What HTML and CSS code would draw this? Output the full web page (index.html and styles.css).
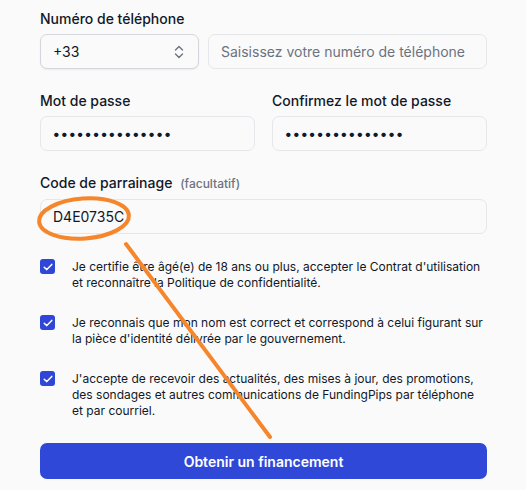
FILE: index.html
```html
<!DOCTYPE html>
<html lang="fr">
<head>
<meta charset="utf-8">
<link rel="stylesheet" href="styles.css">
</head>
<body>
<div class="form">
  <div class="field">
    <div class="label">Numéro de téléphone</div>
    <div class="phone-row">
      <div class="control select">
        <span>+33</span>
        <svg class="chev" width="10" height="14" viewBox="0 0 10 14"><path d="M1.5 5 L5 1.5 L8.5 5 M1.5 9 L5 12.5 L8.5 9" fill="none" stroke="#6b7280" stroke-width="1.4" stroke-linecap="round" stroke-linejoin="round"/></svg>
      </div>
      <div class="control grow placeholder">Saisissez votre numéro de téléphone</div>
    </div>
  </div>

  <div class="two-col">
    <div class="field">
      <div class="label">Mot de passe</div>
      <div class="control dots">•••••••••••••••</div>
    </div>
    <div class="field">
      <div class="label">Confirmez le mot de passe</div>
      <div class="control dots">•••••••••••••••</div>
    </div>
  </div>

  <div class="field">
    <div class="label">Code de parrainage <span class="opt">(facultatif)</span></div>
    <div class="control">D4E0735C</div>
  </div>

  <div class="checks">
    <div class="check">
      <span class="box"><svg width="10" height="8" viewBox="0 0 10 8"><path d="M1.2 4.2 L3.8 6.6 L8.8 1.4" fill="none" stroke="#fff" stroke-width="1.5" stroke-linecap="round" stroke-linejoin="round"/></svg></span>
      <p>Je certifie être âgé(e) de 18 ans ou plus, accepter le Contrat d'utilisation et reconnaître la Politique de confidentialité.</p>
    </div>
    <div class="check">
      <span class="box"><svg width="10" height="8" viewBox="0 0 10 8"><path d="M1.2 4.2 L3.8 6.6 L8.8 1.4" fill="none" stroke="#fff" stroke-width="1.5" stroke-linecap="round" stroke-linejoin="round"/></svg></span>
      <p>Je reconnais que mon nom est correct et correspond à celui figurant sur la pièce d'identité délivrée par le gouvernement.</p>
    </div>
    <div class="check">
      <span class="box"><svg width="10" height="8" viewBox="0 0 10 8"><path d="M1.2 4.2 L3.8 6.6 L8.8 1.4" fill="none" stroke="#fff" stroke-width="1.5" stroke-linecap="round" stroke-linejoin="round"/></svg></span>
      <p>J'accepte de recevoir des actualités, des mises à jour, des promotions, des sondages et autres communications de FundingPips par téléphone et par courriel.</p>
    </div>
  </div>

  <button class="btn">Obtenir un financement</button>
</div>

<svg class="annot" width="526" height="490" viewBox="0 0 526 490">
  <ellipse cx="84" cy="218.5" rx="45" ry="20" transform="rotate(-4 84 218.5)" fill="none" stroke="#f5862c" stroke-width="4"/>
  <line x1="126" y1="244" x2="270" y2="437" stroke="#f5862c" stroke-width="4" stroke-linecap="round"/>
</svg>
</body>
</html>
```

FILE: styles.css
```css
* { box-sizing: border-box; }
html, body { margin: 0; padding: 0; }
body {
  background: #fafafa;
  font-family: Inter, "Noto Sans", sans-serif;
  color: #111827;
  width: 526px;
  height: 490px;
  overflow: hidden;
  position: relative;
}
.form {
  padding: 9px 39px 0 40px;
  display: flex;
  flex-direction: column;
  gap: 22px;
}
.field {
  display: flex;
  flex-direction: column;
  gap: 5px;
}
.label {
  font-size: 14px;
  font-weight: 500;
  line-height: 20px;
  color: #111827;
}
.opt {
  font-size: 12px;
  font-weight: 500;
  color: #6b7280;
  margin-left: 4px;
}
.phone-row {
  display: flex;
  gap: 9px;
}
.control {
  height: 35px;
  flex: none;
  border: 1px solid #e5e7eb;
  border-radius: 7px;
  background: #fafafa;
  font-size: 14px;
  display: flex;
  align-items: center;
  padding: 0 12px;
  color: #111827;
}
.select {
  width: 159px;
  justify-content: space-between;
  border-color: #d4d6db;
  box-shadow: 0 1px 2px rgba(0,0,0,0.06);
  padding-right: 14px;
}
.grow { flex: 1; }
.placeholder { color: #6b7280; }
.dots {
  font-size: 14px;
  letter-spacing: 1.3px;
  font-weight: 700;
}
.two-col {
  display: grid;
  grid-template-columns: 215px 215px;
  gap: 17px;
}
.checks {
  margin-top: 3px;
  display: flex;
  flex-direction: column;
  gap: 24px;
}
.check {
  display: flex;
  gap: 17px;
  align-items: flex-start;
}
.box {
  width: 15px;
  height: 15px;
  flex: none;
  background: #2f46d6;
  border-radius: 3px;
  display: flex;
  align-items: center;
  justify-content: center;
}
.check p {
  margin: 0;
  font-size: 12px;
  line-height: 16px;
  color: #111827;
  padding-right: 3px;
}
.btn {
  margin-top: 2px;
  height: 36px;
  width: 447px;
  border: none;
  border-radius: 7px;
  background: #2f48d8;
  color: #fff;
  font-family: Inter, "Noto Sans", sans-serif;
  font-size: 14px;
  font-weight: 600;
}
.annot {
  position: absolute;
  left: 0;
  top: 0;
  pointer-events: none;
}
```
